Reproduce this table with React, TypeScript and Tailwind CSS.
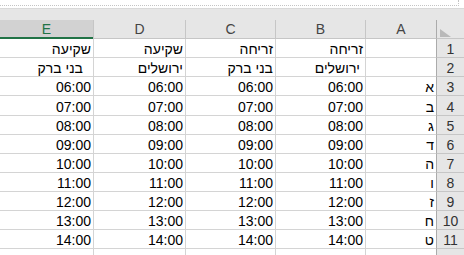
import React from 'react';

// Sheet columns, right to left: A, B, C, D, E
const columns = [
  { key: 'A', width: 'w-[71px]', edge: 'border-l' },
  { key: 'B', width: 'w-[90px]', edge: 'border-l' },
  { key: 'C', width: 'w-[90px]', edge: 'border-l' },
  { key: 'D', width: 'w-[92px]', edge: 'border-l' },
  { key: 'E', width: 'w-[93px]', edge: '' },
];

type Row = {
  num: number;
  height: string;
  cells: string[];
  pads?: string[];
};

const letters = ['א', 'ב', 'ג', 'ד', 'ה', 'ו', 'ז', 'ח', 'ט'];
const times = ['06:00', '07:00', '08:00', '09:00', '10:00', '11:00', '12:00', '13:00', '14:00'];

const rows: Row[] = [
  { num: 1, height: 'h-[19px]', cells: ['', 'זריחה', 'זריחה', 'שקיעה', 'שקיעה'] },
  {
    num: 2,
    height: 'h-[19px]',
    cells: ['', 'ירושלים', 'בני ברק', 'ירושלים', 'בני ברק'],
    pads: ['pr-[2px]', 'pr-[5px]', 'pr-[2px]', 'pr-[2px]', 'pr-[10px]'],
  },
  ...letters.map((l, i) => ({
    num: i + 3,
    height: i === 1 ? 'h-[20px]' : 'h-[19px]',
    cells: [l, times[i], times[i], times[i], times[i]],
  })),
];

function Corner() {
  return (
    <div className="w-[28px] h-full shrink-0 bg-[#e6e6e6] border-l border-b border-l-[#ababab] border-b-[#c6c6c6] flex items-end justify-end pl-[3px] pb-[1px]">
      <svg width="11" height="8" viewBox="0 0 11 8">
        <polygon points="0,0 0,8 11,8" fill="#b9b9b9" />
      </svg>
    </div>
  );
}

export default function App() {
  return (
    <div className="w-[464px] h-[255px] overflow-hidden bg-white font-['Liberation_Sans',Arial,sans-serif] text-[14px] leading-[16px] text-black">
      {/* formula bar edge */}
      <div className="h-[8px] bg-white">
        <div className="w-[459px] h-[6px] border-b border-r border-dotted border-[#c4c4c4]" />
      </div>
      <div className="h-[12px] bg-[#e6e6e6] border-t border-[#d9d9d9]" />

      <div dir="rtl" className="flex flex-col">
        {/* column headers */}
        <div className="flex h-[19px]">
          <Corner />
          {columns.map((c) =>
            c.key === 'E' ? (
              <div
                key={c.key}
                className={`${c.width} shrink-0 h-full bg-[#d2d2d2] border-b-2 border-[#217346] text-[#217346] flex items-center justify-center`}
              >
                {c.key}
              </div>
            ) : (
              <div
                key={c.key}
                className={`${c.width} shrink-0 h-full bg-[#e6e6e6] border-l border-b border-[#c6c6c6] text-[#444444] flex items-center justify-center`}
              >
                {c.key}
              </div>
            )
          )}
        </div>

        {rows.map((r) => (
          <div key={r.num} className={`flex ${r.height}`}>
            <div className="w-[28px] shrink-0 h-full bg-[#e6e6e6] border-l border-b border-l-[#ababab] border-b-[#c6c6c6] text-[#333333] flex items-end justify-center">
              {r.num}
            </div>
            {columns.map((c, i) => (
              <div
                key={c.key}
                className={`${c.width} ${c.edge} shrink-0 h-full border-b border-[#d4d4d4] flex items-end justify-start whitespace-nowrap ${
                  r.pads ? r.pads[i] : 'pr-[2px]'
                }`}
              >
                {r.cells[i]}
              </div>
            ))}
          </div>
        ))}

        {/* next row, cut off at the bottom */}
        <div className="flex h-[10px]">
          <div className="w-[28px] shrink-0 h-full bg-[#e6e6e6] border-l border-l-[#ababab]" />
          {columns.map((c) => (
            <div key={c.key} className={`${c.width} ${c.edge} shrink-0 h-full border-[#d4d4d4]`} />
          ))}
        </div>
      </div>
    </div>
  );
}
